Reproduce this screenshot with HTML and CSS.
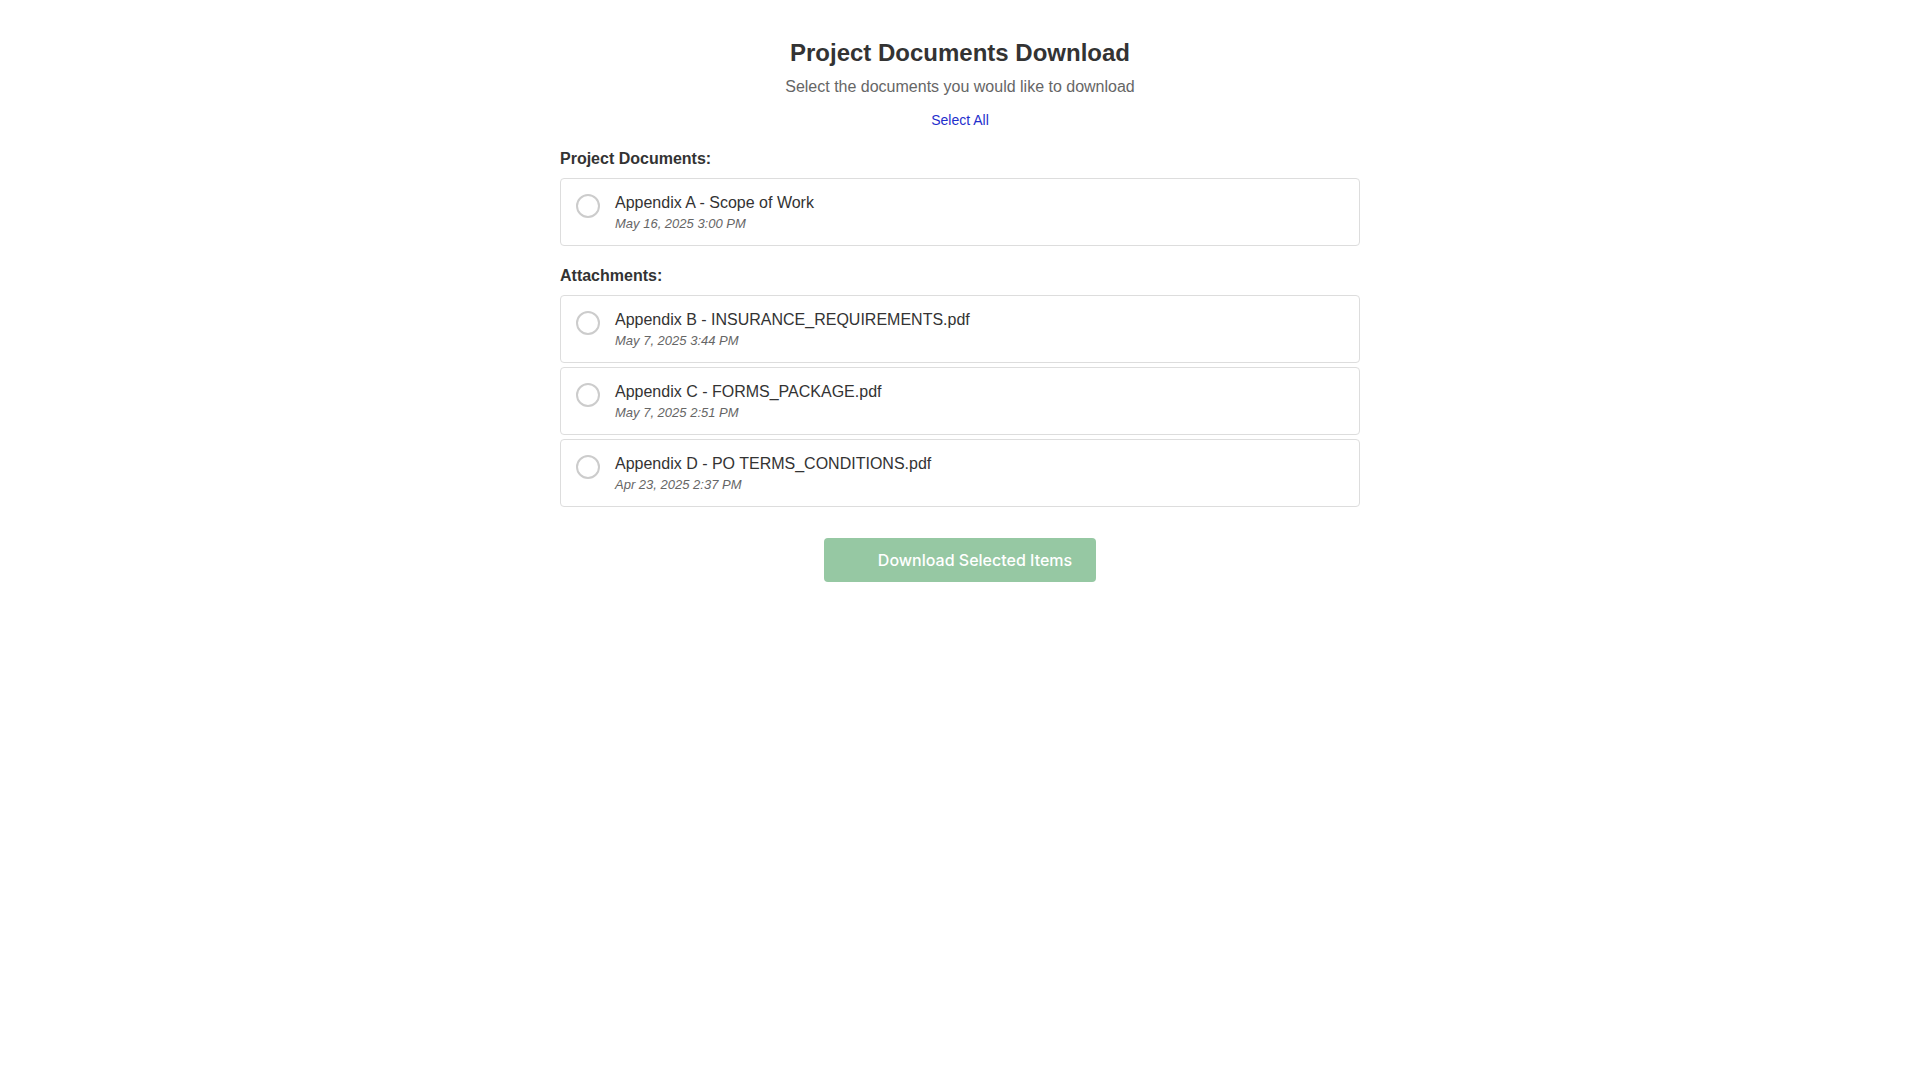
FILE: index.html
```html
<!DOCTYPE html>
<html lang="en">
<head>
<meta charset="utf-8">
<title>Project Documents Download</title>
<link rel="stylesheet" href="styles.css">
</head>
<body>
<main class="page">
  <h1 class="title">Project Documents Download</h1>
  <p class="subtitle">Select the documents you would like to download</p>
  <div class="select-all-row"><a class="select-all" href="#">Select All</a></div>

  <h2 class="section-heading">Project Documents:</h2>
  <div class="doc-list">
    <label class="doc-card">
      <span class="radio"></span>
      <span class="doc-info">
        <span class="doc-name">Appendix A - Scope of Work</span>
        <span class="doc-date">May 16, 2025 3:00 PM</span>
      </span>
    </label>
  </div>

  <h2 class="section-heading">Attachments:</h2>
  <div class="doc-list">
    <label class="doc-card">
      <span class="radio"></span>
      <span class="doc-info">
        <span class="doc-name">Appendix B - INSURANCE_REQUIREMENTS.pdf</span>
        <span class="doc-date">May 7, 2025 3:44 PM</span>
      </span>
    </label>
    <label class="doc-card">
      <span class="radio"></span>
      <span class="doc-info">
        <span class="doc-name">Appendix C - FORMS_PACKAGE.pdf</span>
        <span class="doc-date">May 7, 2025 2:51 PM</span>
      </span>
    </label>
    <label class="doc-card">
      <span class="radio"></span>
      <span class="doc-info">
        <span class="doc-name">Appendix D - PO TERMS_CONDITIONS.pdf</span>
        <span class="doc-date">Apr 23, 2025 2:37 PM</span>
      </span>
    </label>
  </div>

  <div class="actions">
    <button class="download-btn" type="button" disabled>
      <span class="btn-icon"></span>
      <span>Download Selected Items</span>
    </button>
  </div>
</main>
</body>
</html>
```

FILE: styles.css
```css
html, body {
  margin: 0;
  padding: 0;
  background: #ffffff;
}

body {
  font-family: "Liberation Sans", Arial, sans-serif;
  color: #333333;
}

.page {
  width: 800px;
  margin: 0 auto;
  padding-top: 39px;
}

.title {
  margin: 0;
  font-size: 24px;
  line-height: 28px;
  font-weight: 700;
  text-align: center;
  color: #333333;
}

.subtitle {
  margin: 10px 0 0;
  font-size: 16px;
  line-height: 19px;
  text-align: center;
  color: #666666;
}

.select-all-row {
  margin-top: 16px;
  text-align: center;
  font-size: 14px;
  line-height: 17px;
}

.select-all {
  color: #1f2fcc;
  text-decoration: none;
}

.section-heading {
  margin: 20px 0 10px;
  font-size: 16px;
  line-height: 19px;
  font-weight: 700;
  color: #333333;
}

.doc-list {
  display: flex;
  flex-direction: column;
  gap: 4px;
}

.doc-card {
  display: flex;
  align-items: flex-start;
  gap: 15px;
  padding: 15px 15px 14px;
  border: 1px solid #dddddd;
  border-radius: 4px;
  background: #ffffff;
  cursor: pointer;
}

.radio {
  flex: 0 0 auto;
  width: 20px;
  height: 20px;
  border: 2px solid #cccccc;
  border-radius: 50%;
  box-sizing: content-box;
}

.doc-info {
  display: flex;
  flex-direction: column;
}

.doc-name {
  font-size: 16px;
  line-height: 17px;
  color: #333333;
}

.doc-date {
  margin-top: 5px;
  font-size: 13px;
  line-height: 15px;
  font-style: italic;
  color: #666666;
}

.actions {
  display: flex;
  justify-content: center;
  margin-top: 31px;
}

.download-btn {
  display: flex;
  align-items: center;
  height: 44px;
  padding: 0 24px 0 24px;
  border: none;
  border-radius: 4px;
  background: #96c8a3;
  color: #ffffff;
  font-family: Inter, "Noto Sans", sans-serif;
  font-size: 16px;
  font-weight: 500;
}

.btn-icon {
  display: inline-block;
  width: 20px;
  height: 20px;
  margin-right: 10px;
  visibility: hidden;
}
```
